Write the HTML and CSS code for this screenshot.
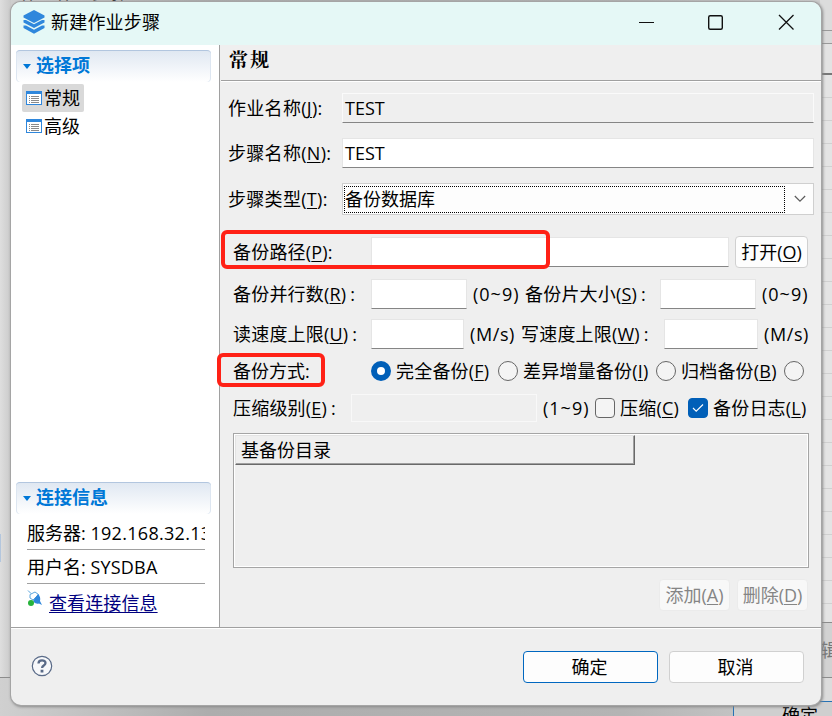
FILE: index.html
```
<!DOCTYPE html>
<html lang="zh-CN">
<head>
<meta charset="utf-8">
<title>新建作业步骤</title>
<link rel="stylesheet" href="styles.css">
</head>
<body>
<div class="backdrop">
  <div class="back-left"><div class="back-scroll"></div></div>
  <div class="back-top">作业作业步骤</div>
  <div class="back-right">
    <div class="back-head"></div>
    <div class="back-grid"></div>
    <div class="back-edit">辑</div>
    <div class="back-foot"></div>
  </div>
  <div class="back-ok">确定</div>
</div>

<div class="dialog">
  <header class="titlebar">
    <svg class="app-icon" width="24" height="26" viewBox="0 0 24 26">
      <g fill="#2f87dc"><path d="M12 1 22.500 6.500v2L12 14 1.500 8.500v-2z"/>
      <path d="M1.500 12v-1H4l8 4.200 8-4.200h2.500v2.500L12 19 1.500 13.500z"/>
      <path d="M1.500 17.500v-1H4l8 4.200 8-4.200h2.500V19L12 24.700 1.500 19z"/></g>
    </svg>
    <h1 class="title">新建作业步骤</h1>
    <svg class="window-controls" width="160" height="18" viewBox="0 0 160 18" fill="none" stroke="#111">
      <path d="M1 9.500h15"/>
      <rect x="70.700" y="2.700" width="13.600" height="13.600" rx="1.500" stroke-width="1.400"/>
      <path d="m141 2 14.500 14.500M155.500 2 141 16.500" stroke-width="1.300"/>
    </svg>
  </header>

  <div class="body">
    <aside class="sidebar">
      <h2 class="section"><i class="caret"></i>选择项</h2>
      <nav class="nav">
        <a class="nav-item selected"><svg class="list-icon" width="16" height="14" viewBox="0 0 16 14"><rect x=".5" y=".5" width="15" height="13" fill="#fff" stroke="#2f87dc"/><path d="M0 0h16v3H0z" fill="#2f87dc"/><path d="M3 5.500h1m1 0h8m-10 2h1m1 0h8m-10 2h1m1 0h8m-10 2h1m1 0h8" stroke="#8a8a8a"/></svg>常规</a>
        <a class="nav-item"><svg class="list-icon" width="16" height="14" viewBox="0 0 16 14"><rect x=".5" y=".5" width="15" height="13" fill="#fff" stroke="#2f87dc"/><path d="M0 0h16v3H0z" fill="#2f87dc"/><path d="M3 5.500h1m1 0h8m-10 2h1m1 0h8m-10 2h1m1 0h8m-10 2h1m1 0h8" stroke="#8a8a8a"/></svg>高级</a>
      </nav>
      <h2 class="section connection"><i class="caret"></i>连接信息</h2>
      <div class="info">
        <p class="info-row">服务器: <span class="ip">192.168.32.13</span></p>
        <p class="info-row">用户名: <span class="user">SYSDBA</span></p>
        <p class="info-link">
          <svg width="16" height="17" viewBox="0 0 16 17"><path d="m1 .5 3 3M3 4.500 8 2l3.500 2.500L6 10 3 8z" fill="#fff" stroke="#5aa5dc"/><path d="M11 4q3 3 2 7l2 4-3-1.500q-4 1-6-2.500z" fill="#2f87dc"/><circle cx="4" cy="13" r="3" fill="#27b33b"/></svg>
          <a>查看连接信息</a>
        </p>
      </div>
    </aside>

    <main class="main">
      <h2 class="heading">常规</h2>
      <form class="form">
        <div class="row row-job"><label>作业名称(<u>J</u>):</label><div class="field readonly">TEST</div></div>
        <div class="row row-step"><label>步骤名称(<u>N</u>):</label><div class="field">TEST</div></div>
        <div class="row row-type"><label>步骤类型(<u>T</u>):</label>
          <div class="select"><span class="select-value">备份数据库</span><svg width="12" height="8" viewBox="0 0 12 8" fill="none" stroke="#5c5c5c" stroke-width="1.200"><path d="m.8 1 5.200 5.200L11.200 1"/></svg></div></div>
        <div class="row row-path"><label>备份路径(<u>P</u>):</label><div class="field"></div><div class="button">打开(<u>O</u>)</div></div>
        <div class="row row-parallel"><label>备份并行数(<u>R</u>)<b>:</b></label><div class="field"></div><span class="range">(0~9)</span><label>备份片大小(<u>S</u>)<b>:</b></label><div class="field"></div><span class="range">(0~9)</span></div>
        <div class="row row-speed"><label>读速度上限(<u>U</u>)<b>:</b></label><div class="field"></div><span>(M/s)</span><label>写速度上限(<u>W</u>)<b>:</b></label><div class="field"></div><span>(M/s)</span></div>
        <div class="row row-mode"><label>备份方式:</label><i class="radio checked"></i><span>完全备份(<u>F</u>)</span><i class="radio"></i><span>差异增量备份(<u>I</u>)</span><i class="radio"></i><span>归档备份(<u>B</u>)</span><i class="radio"></i></div>
        <div class="row row-compress"><label>压缩级别(<u>E</u>)<b>:</b></label><div class="field disabled"></div><span class="range">(1~9)</span><i class="check"></i><span>压缩(<u>C</u>)</span><i class="check checked"><svg width="12" height="10" viewBox="0 0 12 10" fill="none" stroke="#fff" stroke-width="1.100"><path d="m1 5 3.200 3.200L11 1.500"/></svg></i><span>备份日志(<u>L</u>)</span></div>
        <div class="table"><div class="table-head">基备份目录</div></div>
        <div class="actions"><div class="button off">添加(<u>A</u>)</div><div class="button off">删除(<u>D</u>)</div></div>
      </form>
    </main>
  </div>

  <footer class="footer">
    <svg class="help" width="22" height="22" viewBox="0 0 22 22" fill="none" stroke="#5a6b88"><circle cx="11" cy="11" r="9.700" fill="#f7f8fa" stroke-width="1.200"/><path d="M7.500 8.500C7.500 4.300 14.500 4.500 14.500 8c0 2.700-3.400 2.400-3.400 5" stroke-width="2.300"/><path d="M11 14.800v2.600" stroke-width="2.800"/></svg>
    <div class="button large primary">确定</div>
    <div class="button large">取消</div>
  </footer>
</div>
<div class="mark mark-path"></div>
<div class="mark mark-mode"></div>
</body>
</html>
```

FILE: styles.css
```
* { box-sizing: border-box; }
body, h1, h2, p { margin: 0; }
body {
  position: relative;
  width: 832px;
  height: 716px;
  overflow: hidden;
  background: #c4c4c4;
  color: #000;
  font: 18px/24px "Open Sans", "Noto Sans CJK SC", sans-serif;
}
u { text-decoration-thickness: 1px; text-underline-offset: 2px; }

/* window behind the dialog */
.backdrop { position: absolute; inset: 0; overflow: hidden; background: linear-gradient(90deg, #d0d0d0, #adadad 25%, #b4b4b4 75%, #cfcfcf); }
.back-left { position: absolute; left: 0; top: 0; width: 11px; height: 678px; border-bottom: 1px solid #8c8c8c; background: linear-gradient(90deg, #dedede, #cacaca); }
.back-scroll { width: 1px; height: 28px; margin-top: 534px; background: #b3c6dd; }
.back-top { position: absolute; left: 20px; top: -19px; height: 21px; line-height: 22px; color: #333; }
.back-right { position: absolute; right: 0; top: 0; width: 12px; height: 716px; background: #dcdcdc; }
.back-head { height: 75px; border-bottom: 2px solid #777; background: linear-gradient(#dcdcdc 30px, #999 30px 31px, #dadada 31px 43px, #999 43px 44px, #e3e3e3 44px); }
.back-grid { height: 548px; border-bottom: 1px solid #8c8c8c; background: repeating-linear-gradient(#e4e4e4 0 22px, #d0d0d0 22px 23px); }
.back-edit { height: 55px; padding-top: 15px; border-bottom: 1px solid #8c8c8c; color: #777; background: #d2d2d2; }
.back-foot { height: 38px; }
.back-ok { position: absolute; left: 733px; top: 701px; width: 120px; height: 40px; padding: 1px 0 0 48px; border: 1px solid #2672b5; background: #cfcfcf; }

.dialog {
  position: absolute;
  left: 11px;
  top: 2px;
  width: 810px;
  height: 703px;
  overflow: hidden;
  display: flex;
  flex-direction: column;
  border-radius: 10px;
  background: #efefef;
  box-shadow: 0 0 0 1px #a5a5a5, 1px 1px 3px 1px #888;
}
.titlebar { display: flex; height: 43px; padding: 7px 23px 0 11px; background: #e5f8f6; }
.title { margin-left: 5px; padding-top: 1px; font-size: 18px; font-weight: 400; line-height: 24px; letter-spacing: .2px; }
.window-controls { margin: 4px 0 0 auto; }
.body { display: flex; height: 583px; border-bottom: 1px solid #a0a0a0; box-shadow: 0 1px #fff; }

.sidebar { display: flex; flex-direction: column; width: 209px; padding: 5px 8px 0 5px; border-right: 1px solid #a0a0a0; background: #fff; }
.section {
  display: flex;
  align-items: center;
  height: 32px;
  padding: 0 0 3px 6px;
  border-top: 1px solid #b2c6df;
  border-radius: 4px;
  background: linear-gradient(#e0e8f2, #fff);
  box-shadow: inset 1px 0 #dde6f1, inset -1px 0 #dde6f1;
  color: #0078d7;
  font-size: 18px;
  font-weight: 700;
}
.caret { margin: 3px 5px 0 1px; border: solid transparent; border-width: 5px 4.500px 0; border-top-color: #0078d7; }
.nav { padding: 2px 0 0 6px; }
.nav-item { display: flex; align-items: center; width: 62px; height: 28px; padding-left: 4px; border-radius: 2px; }
.selected { background: #d9d9d9; }
.list-icon { margin-right: 2px; }
.connection { margin-top: auto; }
.info { height: 113px; padding: 2px 6px 0 11px; }
.info-row { height: 34px; overflow: hidden; padding-top: 5px; border-bottom: 1px solid #a0a0a0; white-space: nowrap; }
.ip { letter-spacing: .3px; }
.user { letter-spacing: .2px; }
.info-link { display: flex; padding-top: 6px; }
.info-link a { margin: 1px 0 0 6px; color: #000080; text-decoration: underline; text-decoration-thickness: 1px; text-underline-offset: 2px; letter-spacing: .1px; }

.main { flex: 1; margin-left: 1px; }
.heading { height: 36px; padding: 1px 0 0 8px; border-bottom: 1px solid #a0a0a0; box-shadow: 0 1px #fff; font: 700 19px/26px "Noto Serif CJK SC", "Noto Sans CJK SC", serif; letter-spacing: 2px; }
.form { padding: 12px 8px 0 12px; }
.row { display: grid; align-items: center; height: 30px; white-space: nowrap; }
.row label { letter-spacing: .2px; }
.row b { margin-left: 4px; font-weight: 400; }
.field { height: 30px; padding: 2px; border: 1px solid #e5e5e5; border-bottom-color: #858585; background: #fff; }
.readonly { border-color: #fafafa; border-bottom-color: #858585; background: #efefef; }
.row-job, .row-step, .row-type { grid-template-columns: 114px 472px; margin-left: -5px; }
.row-job label, .row-step label, .row-type label { letter-spacing: .3px; }
.row-step, .row-type { margin-top: 15px; }
.row-type { height: 32px; }
.select { display: flex; align-items: center; height: 32px; padding: 0 7px 0 1px; border: 1px solid #cfcfcf; background: #fdfdfd; }
.select-value { width: 443px; height: 27px; margin-right: 9px; border: 1px dotted #000; }
.row-path { grid-template-columns: 138px 358px 79px; height: 32px; margin-top: 21px; }
.row-path .button { margin-left: 6px; }
.button { display: flex; align-items: center; justify-content: center; height: 32px; border: 1px solid #d0d0d0; border-radius: 4px; background: #fdfdfd; }
.row-parallel { grid-template-columns: 138px 96px 58px 135px 96px 50px; margin-top: 11px; }
.row-parallel span { padding-left: 6px; }
.row .range { letter-spacing: 1px; }
.row-speed { grid-template-columns: 138px 93px 57px 143px 94px 50px; margin-top: 10px; }
.row-speed span { padding-left: 6px; letter-spacing: .6px; }
.row-mode { grid-template-columns: 138px 25px 102px 25px 133px 25px 103px 20px; height: 22px; margin-top: 11px; transform: translateY(-1px); }
.row-mode label { letter-spacing: 0; }
.row-mode span, .row-compress span { letter-spacing: .2px; }
.radio { width: 20px; height: 20px; border: 1px solid #666; border-radius: 50%; background: #f4f4f4; }
.radio.checked { border: 6px solid #005fb8; background: #fff; }
.row-compress { grid-template-columns: 118px 186px 58px 25px 68px 25px 95px; margin-top: 11px; }
.row-compress .range { padding-left: 6px; }
.disabled { height: 28px; border: 1px solid #f8f8f8; background: #efefef; }
.check { display: flex; align-items: center; justify-content: center; width: 20px; height: 20px; border: 1px solid #666; border-radius: 4px; background: #f4f4f4; }
.check.checked { border-color: #005fb8; background: #005fb8; }
.table { width: 576px; height: 135px; margin-top: 10px; padding: 1px; border: 1px solid #a5a5a5; box-shadow: inset 1px 1px #fff, inset -1px -1px #fff; }
.table-head { width: 400px; height: 30px; padding: 2px 5px; border: 1px solid #e3e3e3; border-right-color: #696969; border-bottom-color: #696969; box-shadow: inset -1px -1px #a0a0a0; }
.actions { display: flex; justify-content: flex-end; gap: 7px; margin: 11px 6px 0; }
.off { width: 71px; border-color: #ebebeb; background: #f8f8f8; color: #858585; }

.footer { display: flex; flex: 1; align-items: flex-start; padding: 23px 17px 0 20px; }
.help { margin: 4px auto 0 0; }
.large { width: 135px; margin-left: 11px; padding-right: 2px; }
.primary { border-color: #0067c0; }

.mark { position: absolute; border: 4px solid #ff2116; border-radius: 6px; }
.mark-path { left: 221px; top: 230px; width: 329px; height: 39px; }
.mark-mode { left: 217px; top: 353px; width: 108px; height: 34px; }
```
